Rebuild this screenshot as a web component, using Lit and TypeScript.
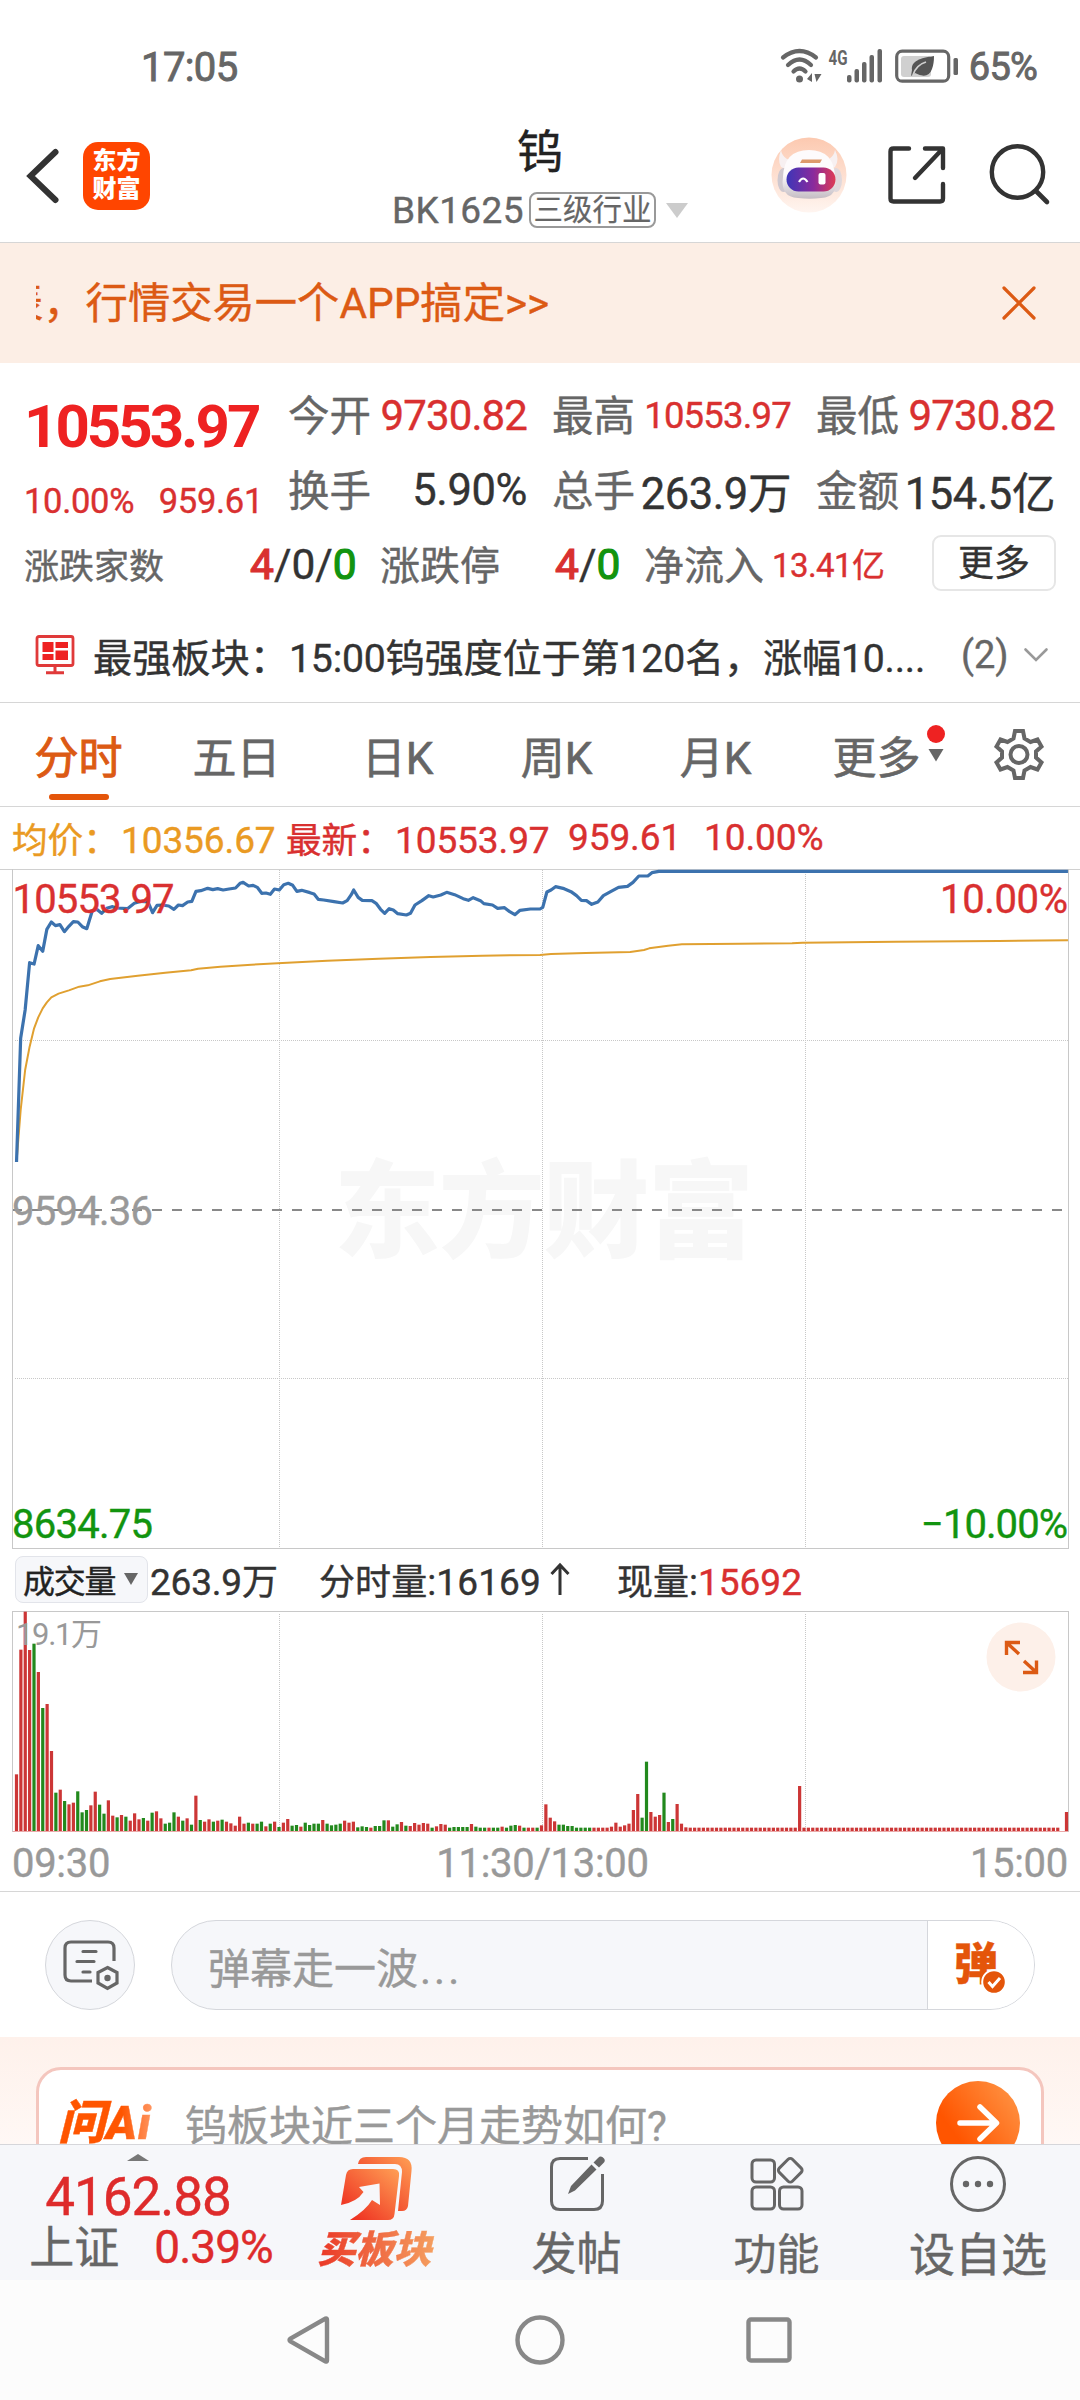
import { LitElement, html, svg, css } from "lit";
import { customElement } from "lit/decorators.js";

const PRICE =
  "48,1416 60,1045 73,960 86,818 99,822 111,767 124,784 136,718 149,696 161,707 174,704 187,725 200,709 213,695 226,696 239,710 252,716 268,662 281,658 295,670 310,655 325,650 340,654 370,656 390,640 410,634 430,636 443,668 456,646 470,645 490,648 505,658 518,645 530,647 545,636 557,634 569,604 583,602 603,595 618,599 632,596 648,600 665,597 684,594 697,580 706,577 722,588 735,586 747,592 760,610 772,609 785,613 797,597 811,600 824,584 837,580 850,586 862,604 876,601 900,608 912,612 924,628 940,630 970,635 995,639 1008,632 1020,614 1027,600 1040,622 1052,631 1080,632 1092,640 1105,658 1117,670 1130,656 1142,660 1155,671 1180,675 1192,670 1205,645 1225,632 1245,617 1258,621 1280,615 1297,607 1320,614 1345,626 1360,631 1374,623 1395,632 1405,641 1430,645 1445,655 1465,653 1480,665 1495,674 1510,661 1540,657 1568,657 1576,652 1588,606 1600,600 1613,590 1638,596 1658,605 1674,617 1688,631 1703,632 1718,643 1736,636 1752,617 1773,605 1796,592 1822,589 1838,577 1855,558 1881,558 1893,548 1913,544 3101,544";

const AVERAGE =
  "48,1416 60,1260 73,1140 86,1070 99,1015 111,982 124,955 136,937 149,922 170,911 200,901 230,890 255,886 290,874 320,867 400,857 480,848 555,841 575,836 640,830 730,824 820,819 950,812 1100,806 1250,801 1400,797 1568,795 1600,792 1700,789 1830,786 1870,780 1885,775 1940,767 1980,763 2150,761 2300,760 2330,758 2600,755 2900,753 3101,751";

// One token per minute: direction (r = up, g = down) and size in thirds of a pixel.
const VOLUME_OPEN =
  "r170 r544 r658 r543 g562 r477 g369 r381 r240 g115 r124 g90 r80 r85 g119 g56 g63 r77 r118 g79 g52 r92 r46 g41 r48 g43 r31 r53 r35 g39 r31 g55 r59 r38 g22 g25 g56 r43 g31 r38 g19 r106 g33 r28 r35 g28 r31 g34 r28 r23 r16 r43 r22 g25 r22 g22 g28 r14 g22 r28 g12 r25 r36 g16 g18 r13 g25 g18 g22 g22 r33 g22 g17 g19 g22 r31 r25 r28 g11 g14 g12 r10 g15 g15 g32 r32 g13 g20 r27 g16 r15 r24 r19 r24 r22 g10 r14 r21 r19 g10 g12 g12 g12 g12 r21 g13 g10 g10 r10 g10 g10 r13 g10 g16 g18 r16 g10 r10 r10 g10 r17 r80 r40 r29 g19 g19 g15 g15 g10 g10 g10 g10 r10 r10 r10 r10 r13 r25 r13 r17 r22 r63 r111 g40 g208 r57 r43 r48 g115 r27 g36 r81 r22 r11";

const VOLUME: string[] = [
  ...VOLUME_OPEN.split(" "),
  ...Array(25).fill("r10"),
  "r135",
  ...Array(59).fill("r10"),
  "r0",
  "r57",
];

const FONT = css`
  :host {
    display: block;
    font-family: Roboto, "Noto Sans CJK SC", sans-serif;
    color: #333;
    -webkit-text-stroke-width: 0.4px;
  }
  * {
    box-sizing: border-box;
  }
  svg {
    display: block;
    flex: none;
    overflow: visible;
  }
  svg text {
    -webkit-text-stroke-width: 0;
  }
  .row {
    display: flex;
    align-items: center;
    white-space: nowrap;
  }
  .red {
    color: #d93030;
  }
  .green {
    color: #12940f;
  }
`;

@customElement("status-bar")
class StatusBar extends LitElement {
  static styles = [
    FONT,
    css`
      .bar {
        height: 126px;
        padding: 8px 43px 0 141px;
        justify-content: space-between;
        color: #666;
        -webkit-text-stroke-width: 0.9px;
      }
      .time {
        font-size: 40px;
        letter-spacing: -0.6px;
      }
      .pct {
        font-size: 38px;
        letter-spacing: -0.8px;
        margin-left: 9px;
      }
      .bar svg {
        margin-top: -2px;
      }
    `,
  ];
  render() {
    return html`<div class="bar row">
      <span class="time">17:05</span>
      <div class="row">
        <svg width="180" height="36" viewBox="0 0 180 36">
          <g fill="none" stroke="#666" stroke-width="4.2" stroke-linecap="round">
            <path d="M3 9.5Q19.500-3.500 36 9.500" />
            <path d="M8 17Q19.500 6 31 17" />
            <path d="M13.500 23.500Q19.500 17.500 25.500 23.500" />
          </g>
          <circle cx="19.500" cy="31" r="3.500" fill="#666" />
          <path d="M32 25v9l-5-3zM34.500 26h7l-5 8z" fill="#666" />
          <text x="48.500" y="16.500" font-size="21" font-weight="700" fill="#666" textLength="19" lengthAdjust="spacingAndGlyphs">4G</text>
          <g fill="#666">
            <rect x="67" y="27" width="4.500" height="7.500" rx="2" />
            <rect x="74.500" y="21" width="4.500" height="13.500" rx="2" />
            <rect x="82" y="14" width="4.500" height="20.500" rx="2" />
            <rect x="89.500" y="7" width="4.500" height="27.500" rx="2" />
            <rect x="97.500" y="1" width="4.500" height="33.500" rx="2" />
          </g>
          <rect x="116.700" y="3.200" width="52" height="30" rx="5.500" fill="none" stroke="#666" stroke-width="3.200" />
          <rect x="121" y="8" width="30" height="21" rx="3" fill="#d0d0d0" />
          <path d="M154 8C140 10 131 13 132 22l-1 6 4-3q13 7 17-4 2-5 2-13z" fill="#555" />
          <path d="M133 27Q136 17 146 14" stroke="#d0d0d0" stroke-width="1.800" fill="none" />
          <rect x="173.500" y="10" width="4.500" height="17" rx="1.500" fill="#666" />
        </svg>
        <span class="pct">65%</span>
      </div>
    </div>`;
  }
}

@customElement("page-header")
class PageHeader extends LitElement {
  static styles = [
    FONT,
    css`
      .head {
        display: grid;
        grid-template-columns: 360px 360px 360px;
        height: 117px;
        border-bottom: 1px solid #d6d6d6;
      }
      .left {
        height: 98px;
        padding: 1px 0 0 26px;
      }
      .logo {
        width: 67px;
        height: 68px;
        margin-left: 24px;
        border-radius: 15px;
        background: #ff4500;
        color: #fff;
        font-weight: 900;
        font-size: 24px;
        line-height: 28px;
        text-align: center;
        padding-top: 5px;
        display: flex;
        flex-direction: column;
        -webkit-text-stroke-width: 0;
      }
      .mid {
        display: flex;
        flex-direction: column;
        align-items: center;
      }
      .title {
        font-size: 46px;
        line-height: 52px;
        color: #222;
      }
      .sub {
        height: 40px;
        margin-top: 12px;
        font-size: 37px;
        color: #666;
      }
      .code {
        letter-spacing: 0.4px;
      }
      .tag {
        border: 2px solid #999;
        border-radius: 8px;
        height: 36px;
        line-height: 33px;
        width: 127px;
        margin-left: 5px;
        text-align: center;
        font-size: 29.500px;
        -webkit-text-stroke-width: 0.2px;
      }
      .caret {
        margin-left: 10px;
      }
      .right {
        height: 98px;
        padding-left: 51px;
      }
      .share {
        margin-left: 40px;
      }
      .search {
        margin-left: 43px;
      }
    `,
  ];
  render() {
    return html`<div class="head">
      <div class="left row">
        <svg width="33" height="56" viewBox="0 0 33 56">
          <path d="M29.500 4L4.500 28l25 24" fill="none" stroke="#333" stroke-width="6" stroke-linecap="round" />
        </svg>
        <div class="logo"><span>东方</span><span>财富</span></div>
      </div>
      <div class="mid">
        <div class="title">钨</div>
        <div class="sub row">
          <span class="code">BK1625</span><span class="tag">三级行业</span>
          <svg class="caret" width="22" height="15"><path d="M0 0h22L11 15z" fill="#ccc" /></svg>
        </div>
      </div>
      <div class="right row">
        <svg width="76" height="76" viewBox="0 0 76 76">
          <defs>
            <linearGradient id="bg" x2="0" y2="1"><stop stop-color="#fcc9b0" /><stop offset="1" stop-color="#fff5f0" /></linearGradient>
            <linearGradient id="visor"><stop stop-color="#3d36b8" /><stop offset=".55" stop-color="#8a2a9c" /><stop offset="1" stop-color="#de3b55" /></linearGradient>
            <linearGradient id="shell" x2="0" y2="1"><stop offset=".5" stop-color="#fdfbfc" /><stop offset="1" stop-color="#c4bcc3" /></linearGradient>
          </defs>
          <circle cx="38" cy="38" r="37.500" fill="url(#bg)" />
          <path d="M10 13q-4 10 0 17l7 3 7-9-8-2q-5-3-6-9zM64 13q5 10 0 17l-7 3-6-9 7-2q5-3 6-9z" fill="#f7f0f1" />
          <ellipse cx="12.500" cy="43" rx="6" ry="12" fill="#cfc8cf" />
          <ellipse cx="65" cy="43" rx="6" ry="12" fill="#e0d8dc" />
          <path d="M12 40Q13 13 38 13t26 27q4 20-14 21-11 1.500-23 0Q9 60 12 40z" fill="url(#shell)" />
          <path d="M31 22.500h20l-2 3.500H29z" fill="#dd9a6c" />
          <rect x="15.500" y="30.500" width="49" height="24" rx="12" fill="url(#visor)" />
          <path d="M28 45q4-7 8.500 0" fill="none" stroke="#fff" stroke-width="2.200" />
          <rect x="47.500" y="36" width="7" height="11.500" rx="2" fill="#fff" />
        </svg>
        <svg class="share" width="60" height="60" viewBox="0 0 60 60">
          <g fill="none" stroke="#333" stroke-width="4.400" stroke-linecap="round" stroke-linejoin="round">
            <path d="M22 3.500H6.500Q3.500 3.500 3.500 6.500V53.500Q3.500 56.500 6.500 56.500H53Q56 56.500 56 53.500V39" />
            <path d="M38 3.500H56V23M55 4.500L28 33" />
          </g>
        </svg>
        <svg class="search" width="62" height="62" viewBox="0 0 62 62">
          <circle cx="27.500" cy="28" r="25.700" fill="none" stroke="#333" stroke-width="4.400" />
          <path d="M46 47L57 58" stroke="#333" stroke-width="4.600" stroke-linecap="round" />
        </svg>
      </div>
    </div>`;
  }
}

@customElement("promo-banner")
class PromoBanner extends LitElement {
  static styles = [
    FONT,
    css`
      .banner {
        height: 120px;
        padding: 0 44px 0 36px;
        background: #fceee5;
        color: #dc5a14;
        justify-content: space-between;
      }
      .clip {
        overflow: hidden;
      }
      .msg {
        display: block;
        font-size: 42.300px;
        line-height: 60px;
        margin: 1px 0 0 -35px;
      }
    `,
  ];
  render() {
    return html`<div class="banner row">
      <div class="clip"><span class="msg">表，行情交易一个APP搞定&gt;&gt;</span></div>
      <svg width="34" height="34" viewBox="0 0 34 34">
        <path d="M2 2l30 30M32 2L2 32" stroke="#dc5a14" stroke-width="3.200" stroke-linecap="round" />
      </svg>
    </div>`;
  }
}

@customElement("quote-panel")
class QuotePanel extends LitElement {
  static styles = [
    FONT,
    css`
      .panel {
        height: 340px;
        border-bottom: 1px solid #d6d6d6;
        padding: 18px 24px 0 24px;
      }
      .top {
        display: grid;
        grid-template-columns: 264px 238px 26px 238px 26px 238px;
        height: 162px;
      }
      .last {
        color: #ee2222;
        font-size: 60px;
        font-weight: 700;
        letter-spacing: -3px;
        line-height: 70px;
        margin-top: 11px;
        -webkit-text-stroke-width: 0;
      }
      .chg {
        font-size: 34.500px;
        line-height: 40px;
        margin-top: 19px;
        display: flex;
        justify-content: space-between;
        padding-right: 25px;
        letter-spacing: -0.3px;
      }
      .cell {
        height: 68px;
        justify-content: space-between;
        font-size: 42px;
      }
      .cell.first {
        margin-bottom: 7px;
      }
      .k {
        color: #666;
        font-size: 41.500px;
        margin-top: -5px;
      }
      .v {
        letter-spacing: -0.4px;
        margin-right: -1px;
        font-size: 43.500px;
      }
      .v.red {
        font-size: 42px;
        letter-spacing: -0.9px;
      }
      .v.small {
        font-size: 36.500px;
        letter-spacing: -0.8px;
      }
      .extra {
        height: 56px;
        margin-top: -8px;
        color: #666;
      }
      .homes {
        font-size: 35px;
        width: 226px;
      }
      .lg {
        font-size: 42.500px;
        color: #333;
        width: 130px;
        padding-top: 2px;
      }
      .mid {
        font-size: 40px;
        width: 175px;
      }
      .lg.two {
        width: 89px;
      }
      .flow {
        font-size: 40px;
        width: 128px;
      }
      .amt {
        font-size: 33px;
        letter-spacing: -0.6px;
        width: 160px;
      }
      .b {
        -webkit-text-stroke-width: 1.2px;
      }
      .more {
        width: 124px;
        height: 56px;
        line-height: 54px;
        border: 2px solid #e6e6e6;
        border-radius: 9px;
        text-align: center;
        font-size: 36px;
        color: #333;
      }
      .strong {
        margin-top: 36px;
        height: 56px;
        padding-left: 11px;
        font-size: 39.200px;
      }
      .strong .name {
        margin-left: 18px;
        width: 196px;
      }
      .strong .txt {
        width: 672px;
        letter-spacing: -0.2px;
      }
      .strong .cnt {
        color: #666;
        font-size: 38px;
        width: 63px;
      }
    `,
  ];
  private cell(k: string, v: string, cls: string, first: boolean) {
    return html`<div class="cell row ${first ? "first" : ""}"><span class="k">${k}</span><span class="v ${cls}">${v}</span></div>`;
  }
  render() {
    return html`<div class="panel">
      <div class="top">
        <div>
          <div class="last">10553.97</div>
          <div class="chg red"><span>10.00%</span><span>959.61</span></div>
        </div>
        <div>${this.cell("今开", "9730.82", "red", true)}${this.cell("换手", "5.90%", "", false)}</div>
        <div></div>
        <div>${this.cell("最高", "10553.97", "red small", true)}${this.cell("总手", "263.9万", "", false)}</div>
        <div></div>
        <div>${this.cell("最低", "9730.82", "red", true)}${this.cell("金额", "154.5亿", "", false)}</div>
      </div>
      <div class="extra row">
        <span class="homes">涨跌家数</span>
        <span class="lg"><span class="red b">4</span>/0/<span class="green b">0</span></span>
        <span class="mid">涨跌停</span>
        <span class="lg two"><span class="red b">4</span>/<span class="green b">0</span></span>
        <span class="flow">净流入</span>
        <span class="amt red">13.41亿</span>
        <span class="more">更多</span>
      </div>
      <div class="strong row">
        <svg width="40" height="40" viewBox="0 0 40 40">
          <rect x="2" y="1.500" width="36" height="29" rx="2" fill="none" stroke="#e03a3a" stroke-width="2.800" />
          <path d="M7.500 7h11v10h-11zM20.500 7H33v6H20.500zM7.500 19h11v6h-11zM20.500 15.500H33V25H20.500z" fill="#ee2222" />
          <path d="M20 31v6M11 37.700h18" stroke="#e03a3a" stroke-width="3" />
        </svg>
        <span class="name">最强板块：</span>
        <span class="txt">15:00钨强度位于第120名，涨幅10....</span>
        <span class="cnt">(2)</span>
        <svg width="24" height="14" viewBox="0 0 24 14"><path d="M1.500 1.500L12 12 22.500 1.500" fill="none" stroke="#999" stroke-width="2.600" stroke-linecap="round" /></svg>
      </div>
    </div>`;
  }
}

@customElement("period-tabs")
class PeriodTabs extends LitElement {
  static styles = [
    FONT,
    css`
      .tabs {
        height: 104px;
        border-bottom: 1px solid #d6d6d6;
        padding-left: 34px;
        font-size: 44px;
        color: #666;
        -webkit-text-stroke-width: 0.6px;
      }
      .tab {
        display: flex;
        flex-direction: column;
        align-items: center;
        justify-content: center;
        height: 104px;
        width: 89px;
      }
      .on {
        color: #dc5a14;
        -webkit-text-stroke-width: 1px;
      }
      .ink {
        width: 60px;
        height: 6px;
        border-radius: 3px;
        background: #e4550a;
        margin-bottom: -13px;
        margin-top: 7px;
      }
      .w70 {
        width: 73px;
      }
      .five {
        margin-left: 69px;
      }
      .k1 {
        margin-left: 80px;
      }
      .k2 {
        margin-left: 86px;
      }
      .k3 {
        margin-left: 86px;
      }
      .more {
        margin-left: 80px;
      }
      .mark {
        margin: 0 48px 0 6px;
      }
    `,
  ];
  render() {
    const teeth = "M22 3h8l1.500 7.500 6 3.500 7-2.500 4 7-5.500 5v6l5.500 5-4 7-7-2.500-6 3.500L30 50h-8l-1.500-7.500-6-3.500-7 2.500-4-7 5.500-5v-6l-5.500-5 4-7 7 2.500 6-3.500z";
    return html`<div class="tabs row">
      <div class="tab on"><span>分时</span><span class="ink"></span></div>
      <div class="tab five">五日</div>
      <div class="tab w70 k1">日K</div>
      <div class="tab w70 k2">周K</div>
      <div class="tab w70 k3">月K</div>
      <div class="tab more">更多</div>
      <svg class="mark" width="18" height="64" viewBox="0 0 18 64">
        <circle cx="9" cy="11" r="9" fill="#ee2222" />
        <path d="M1.500 26h15L9 38.500z" fill="#666" />
      </svg>
      <svg width="52" height="53" viewBox="0 0 52 53">
        <path d=${teeth} fill="none" stroke="#666" stroke-width="4" />
        <circle cx="26" cy="26.500" r="8.500" fill="none" stroke="#666" stroke-width="4" />
      </svg>
    </div>`;
  }
}

@customElement("price-chart")
class PriceChart extends LitElement {
  static styles = [
    FONT,
    css`
      .info {
        height: 62px;
        padding: 0 0 2px 12px;
        font-size: 37px;
        letter-spacing: -0.1px;
      }
      .avg {
        color: #ea9a22;
        width: 274px;
      }
      .lbl {
        font-size: 35.700px;
        display: inline-block;
        width: 109px;
      }
      .now {
        width: 282px;
      }
      .diff {
        width: 136px;
      }
      .label text {
        font-size: 40px;
        stroke-width: 0.4px;
      }
      .mark {
        font-size: 106px;
        font-weight: 900;
        fill: #f7f7f7;
      }
    `,
  ];
  render() {
    return html`<div class="info row">
        <span class="avg"><span class="lbl">均价：</span>10356.67</span>
        <span class="now red"><span class="lbl">最新：</span>10553.97</span>
        <span class="diff red">959.61</span><span class="red">10.00%</span>
      </div>
      <svg width="1080" height="680" viewBox="0 0 1080 680">
        <text class="mark" x="334" y="380" textLength="420">东方财富</text>
        <g fill="none" stroke="#c8c8c8" shape-rendering="crispEdges">
          <path d="M0 .5H1080" stroke="#d0d0d0" />
          <path d="M12.500 0V679.500H1068.500V0" />
          <path d="M279.500 1V679M542.500 1V679M805.500 1V679M15 171.500H1068M15 509.500H1068" stroke-dasharray="1 1" />
        </g>
        <path d="M13 341H1064" stroke="#888" stroke-width="2" stroke-dasharray="10 10" stroke-dashoffset="1" />
        <g transform="translate(0 -179) scale(.34439 .33333)" fill="none" stroke-linejoin="round">
          <polyline points=${AVERAGE} stroke="#e0a030" stroke-width="2" vector-effect="non-scaling-stroke" />
          <polyline points=${PRICE} stroke="#3c72ae" stroke-width="3.200" vector-effect="non-scaling-stroke" />
        </g>
        <g class="label">
          <text x="12.500" y="44" fill="#d93030" stroke="#d93030" textLength="162">10553.97</text>
          <text x="1068" y="44" fill="#d93030" stroke="#d93030" text-anchor="end" textLength="128">10.00%</text>
          <text x="12" y="356" fill="#999" stroke="#999" textLength="141">9594.36</text>
          <text x="12" y="669" fill="#12940f" stroke="#12940f" textLength="141">8634.75</text>
          <text x="1068" y="669" fill="#12940f" stroke="#12940f" text-anchor="end" textLength="147">−10.00%</text>
        </g>
      </svg>`;
  }
}

@customElement("volume-chart")
class VolumeChart extends LitElement {
  static styles = [
    FONT,
    css`
      .info {
        height: 62px;
        padding: 0 0 2px 15px;
        font-size: 37px;
      }
      .pick {
        width: 133px;
        height: 47px;
        background: #f6f7fa;
        border: 1.500px solid #e2e4ea;
        border-radius: 8px;
        font-size: 32px;
        letter-spacing: -1.200px;
        padding-left: 7px;
        color: #222;
        justify-content: space-between;
        padding-right: 9px;
      }
      .sum {
        margin-left: 2px;
        width: 169px;
        letter-spacing: -0.2px;
      }
      .c {
        font-size: 36px;
      }
      .minute {
        width: 298px;
        letter-spacing: 0.1px;
      }
      .arrow {
        margin: 0 0 0 9px;
        display: inline-block;
      }
      .axis {
        height: 60px;
        padding: 3px 12px 0 12px;
        justify-content: space-between;
        color: #999;
        font-size: 40px;
        letter-spacing: -0.3px;
        border-bottom: 1px solid #d6d6d6;
      }
      .mx {
        margin-right: -5px;
      }
      .r {
        fill: #cc3636;
      }
      .g {
        fill: #22891d;
      }
    `,
  ];
  render() {
    return html`<div class="info row">
        <div class="pick row">成交量<svg width="14" height="12"><path d="M0 0h14L7 12z" fill="#666" /></svg></div>
        <span class="sum">263.9<span class="c">万</span></span>
        <span class="minute row"><span><span class="c">分时量</span>:16169</span><svg class="arrow" width="20" height="33" viewBox="0 0 20 33"><path d="M10 32V2M1.500 11L10 2l8.500 9" fill="none" stroke="#333" stroke-width="3" /></svg></span>
        <span><span class="c">现量</span>:<span class="red">15692</span></span>
      </div>
      <svg width="1080" height="221" viewBox="0 0 1080 221">
        <g fill="none" stroke="#c8c8c8" shape-rendering="crispEdges">
          <path d="M12.500 .5H1068.500V220.500H12.500z" />
          <path d="M279.500 3V220M542.500 3V220M805.500 3V220" stroke-dasharray="1 1" />
        </g>
        <path d="M13 220.500H1068" stroke="#eba9a9" />
        ${VOLUME.map((token, i) => {
          const h = Number(token.slice(1)) / 3;
          return svg`<rect class=${token[0]} x=${14.9 + i * 4.375} y=${220 - h} width="3.200" height=${h} />`;
        })}
        <text x="16" y="34" font-size="31" fill="#999" textLength="86">19.1万</text>
        <circle cx="1021" cy="46" r="34.500" fill="#fdf0e9" />
        <path d="M1006.500 44V31.500H1020M1006.500 31.500L1019 43M1036.500 49.500V61.500H1023M1036.500 61.500L1024 50" fill="none" stroke="#dc5a14" stroke-width="3.400" />
      </svg>
      <div class="axis row"><span>09:30</span><span class="mx">11:30/13:00</span><span>15:00</span></div>`;
  }
}

@customElement("danmu-bar")
class DanmuBar extends LitElement {
  static styles = [
    FONT,
    css`
      .bar {
        height: 145px;
        padding: 1px 45px 0;
        justify-content: space-between;
      }
      .round {
        width: 90px;
        height: 90px;
        border-radius: 50%;
        background: #f6f7fa;
        border: 1.500px solid #d5d7dc;
        display: grid;
        place-items: center;
      }
      .field {
        width: 864px;
        height: 90px;
        border-radius: 45px;
        border: 1.500px solid #d5d7dc;
        background: #f6f7fa;
        overflow: hidden;
        font-size: 42px;
        color: #999;
        padding-left: 36px;
        justify-content: space-between;
      }
      .dots {
        letter-spacing: 3px;
        padding-left: 2px;
      }
      .send {
        width: 107px;
        height: 90px;
        background: #fff;
        border-left: 1.500px solid #d5d7dc;
        padding-left: 26px;
      }
      .glyph {
        font-size: 44px;
        font-weight: 900;
        color: #e4550a;
        line-height: 44px;
      }
      .tick {
        margin: 34px 0 0 -16px;
      }
    `,
  ];
  render() {
    return html`<div class="bar row">
      <div class="round">
        <svg width="56" height="52" viewBox="0 0 56 52">
          <g fill="none" stroke="#666" stroke-width="3.200" stroke-linecap="round">
            <path d="M52 22V9Q52 3 46 3H9Q3 3 3 9V36Q3 42 9 42H30" stroke-linecap="butt" />
            <path d="M21 12.500H34M15 22.500H32M21 33H28" />
            <path d="M45.500 28.500L55 33.500V44L45.500 49.500 36 44V33.500z" />
          </g>
          <circle cx="45.500" cy="39" r="3.200" fill="#666" />
        </svg>
      </div>
      <div class="field row">
        <span>弹幕走一波<span class="dots">...</span></span>
        <div class="send row">
          <span class="glyph">弹</span>
          <svg class="tick" width="24" height="24" viewBox="0 0 24 24">
            <circle cx="12" cy="12" r="11.800" fill="#e4550a" stroke="#fff" stroke-width="2" />
            <path d="M6.500 12l4 4.500 7.500-8.500" fill="none" stroke="#fff" stroke-width="3" />
          </svg>
        </div>
      </div>
    </div>`;
  }
}

@customElement("ask-card")
class AskCard extends LitElement {
  static styles = [
    FONT,
    css`
      .wrap {
        height: 107px;
        overflow: hidden;
        padding: 30px 36px 0;
        background: linear-gradient(#fef1eb, #fff8f5);
      }
      .card {
        height: 140px;
        border: 3px solid #f4c6be;
        border-radius: 25px;
        background: #fff;
        padding: 11px 21px 0 19px;
        align-items: flex-start;
      }
      .ai {
        width: 127px;
        height: 84px;
        line-height: 84px;
        font-size: 47px;
        font-weight: 900;
        font-style: italic;
        letter-spacing: 1px;
        color: transparent;
        background: linear-gradient(90deg, #ff5500 50%, #ffa070 78%);
        -webkit-background-clip: text;
        background-clip: text;
      }
      .q {
        flex: 1;
        line-height: 91px;
        font-size: 42px;
        color: #999;
      }
    `,
  ];
  render() {
    return html`<div class="wrap"><div class="card row">
      <span class="ai">问Ai</span>
      <span class="q">钨板块近三个月走势如何?</span>
      <svg width="84" height="84" viewBox="0 0 84 84">
        <defs><linearGradient id="go" x1=".2" y1=".6" x2=".9" y2=".1"><stop stop-color="#ff5500" /><stop offset="1" stop-color="#ff9040" /></linearGradient></defs>
        <circle cx="42" cy="42" r="42" fill="url(#go)" />
        <path d="M24 42H60M44 26L60.500 42 44 58" fill="none" stroke="#fff" stroke-width="5.500" stroke-linecap="round" stroke-linejoin="round" />
      </svg>
    </div></div>`;
  }
}

@customElement("bottom-bar")
class BottomBar extends LitElement {
  static styles = [
    FONT,
    css`
      .bar {
        height: 136px;
        background: #f6f7fa;
        border-top: 1px solid #d6d6da;
        align-items: flex-start;
        color: #666;
        font-size: 45px;
      }
      .index {
        width: 276px;
        display: flex;
        flex-direction: column;
        align-items: center;
        padding-top: 9px;
      }
      .pt {
        color: #de2b2b;
        font-size: 53px;
        line-height: 54px;
        letter-spacing: -1px;
        margin-top: 9px;
      }
      .pair {
        line-height: 48px;
        gap: 35px;
        padding-left: 26px;
        margin-top: 1px;
      }
      .rate {
        color: #de2b2b;
        font-size: 46px;
        letter-spacing: -1px;
        margin-top: -5px;
      }
      .item {
        display: flex;
        flex-direction: column;
        align-items: center;
        width: 201px;
        padding-top: 11px;
        line-height: 56px;
      }
      .buy {
        width: 201px;
      }
      .item svg {
        margin-bottom: 15px;
      }
      .fn {
        font-size: 43px;
      }
      .hot {
        font-size: 38px;
        font-weight: 900;
        font-style: italic;
        line-height: 44px;
        margin: -9px 4px 0 0;
        padding: 0 4px;
        color: transparent;
        background: linear-gradient(90deg, #ea3324, #f5a060);
        -webkit-background-clip: text;
        background-clip: text;
      }
      .post {
        width: 199px;
      }
      .self {
        width: 202px;
        font-size: 46px;
      }
      .nav {
        height: 120px;
        background: #fcfcfc;
        padding-left: 286px;
      }
      .home {
        margin: 0 181px 0 184px;
      }
    `,
  ];
  render() {
    return html`<div class="bar row">
        <div class="index">
          <svg width="22" height="7"><path d="M0 7L11 0l11 7z" fill="#777" /></svg>
          <span class="pt">4162.88</span>
          <div class="pair row"><span>上证</span><span class="rate">0.39%</span></div>
        </div>
        <div class="item buy">
          <svg width="72" height="66" viewBox="0 0 72 66">
            <defs><linearGradient id="hot" x1="0" y1="1" x2="1" y2="0"><stop offset=".1" stop-color="#ee2f20" /><stop offset="1" stop-color="#ffa055" /></linearGradient></defs>
            <path d="M17 8Q18 1 25 1H58Q72 1 70.500 15L67 50Q66 55 61 55H57L61 16Q61 8 54 8z" fill="url(#hot)" />
            <path d="M5 19Q6 13 12 13H52Q59 13 58 20L53.500 58Q53 64 47 64H9Q25 54 31 44L39 49 38.500 27.500 18 31 22.500 36Q16 46 0 49z" fill="url(#hot)" />
          </svg>
          <span class="hot">买板块</span>
        </div>
        <div class="item post">
          <svg width="56" height="56" viewBox="0 0 56 56">
            <path d="M39 2.500H11Q2.500 2.500 2.500 11V45Q2.500 53.500 11 53.500H45Q53.500 53.500 53.500 45V18" fill="none" stroke="#666" stroke-width="3" />
            <path d="M42.500 8.500L47.500 13.500 26 34.500 19 38 22 30zM44.500 6.500L49 2Q52-1 55 2.500 57 5 54 7.500L50 11.500z" fill="#666" />
          </svg>
          <span>发帖</span>
        </div>
        <div class="item">
          <svg width="54" height="56" viewBox="0 0 54 56">
            <g fill="none" stroke="#666" stroke-width="3">
              <rect x="2" y="4" width="22.500" height="22" rx="4" />
              <rect x="2" y="31" width="22.500" height="22" rx="4" />
              <rect x="29.500" y="31" width="22.500" height="22" rx="4" />
              <rect x="31" y="5" width="18.500" height="18.500" rx="3" transform="rotate(45 40.250 14.250)" />
            </g>
          </svg>
          <span class="fn">功能</span>
        </div>
        <div class="item self">
          <svg width="58" height="56" viewBox="0 0 58 56">
            <circle cx="29" cy="28" r="26.500" fill="none" stroke="#666" stroke-width="3" />
            <g fill="#666"><circle cx="17" cy="28" r="3.200" /><circle cx="29" cy="28" r="3.200" /><circle cx="41" cy="28" r="3.200" /></g>
          </svg>
          <span>设自选</span>
        </div>
      </div>
      <div class="nav row">
        <svg width="45" height="50" viewBox="0 0 45 50"><path d="M41 5V45.500Q41 47 39.500 46.500L4.500 26.500Q2.500 25 4.500 23.500L39.500 3.500Q41 3 41 5z" fill="none" stroke="#888" stroke-width="4.400" /></svg>
        <svg class="home" width="50" height="50"><circle cx="25" cy="25" r="22.500" fill="none" stroke="#888" stroke-width="4.400" /></svg>
        <svg width="46" height="46"><rect x="2.500" y="2.500" width="41" height="41" rx="2.500" fill="none" stroke="#888" stroke-width="4.400" /></svg>
      </div>`;
  }
}

@customElement("app-root")
class AppRoot extends LitElement {
  static styles = css`
    :host {
      display: block;
      width: 1080px;
      height: 2400px;
      overflow: hidden;
      background: #fff;
    }
  `;
  render() {
    return html`
      <status-bar></status-bar>
      <page-header></page-header>
      <promo-banner></promo-banner>
      <quote-panel></quote-panel>
      <period-tabs></period-tabs>
      <price-chart></price-chart>
      <volume-chart></volume-chart>
      <danmu-bar></danmu-bar>
      <ask-card></ask-card>
      <bottom-bar></bottom-bar>
    `;
  }
}
